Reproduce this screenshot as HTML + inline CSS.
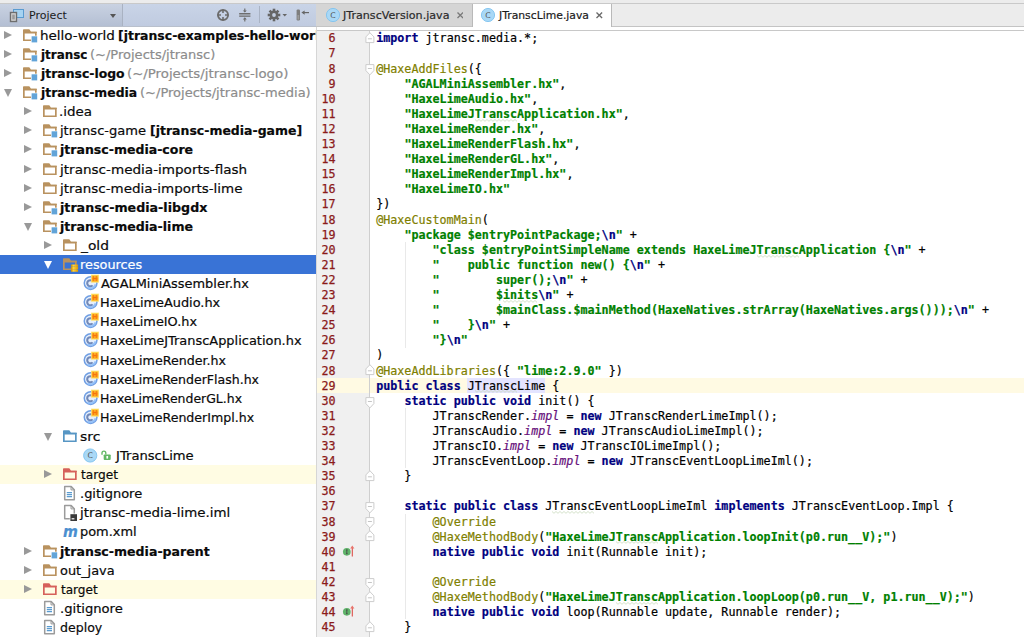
<!DOCTYPE html><html><head><meta charset="utf-8"><title>JTranscLime.java</title><style>
html,body{margin:0;padding:0;}
body{width:1024px;height:637px;overflow:hidden;position:relative;background:#fff;font-family:"DejaVu Sans","Liberation Sans",sans-serif;}
.abs{position:absolute;}
#left{position:absolute;left:0;top:0;width:315.5px;height:637px;overflow:hidden;background:#fff;}
#topstrip{position:absolute;left:0;top:0;width:1024px;height:3px;background:#ececec;border-bottom:1px solid #c9c9c9;}
#lhead{position:absolute;left:0;top:3.5px;width:316px;height:22.5px;background:linear-gradient(#c9d4e7,#c0cbe0);border-bottom:0.6px solid #b9c0cc;}
#lhead .btn{position:absolute;left:0;top:0;width:122px;height:22px;background:linear-gradient(#c9d2e2,#b4bfd3);border-right:1px solid #a9b2c2;}
#lhead .title{position:absolute;left:29px;top:3px;font-size:12.8px;color:#222;line-height:16px;}
.row{position:absolute;left:0;width:316px;height:19.1px;font-size:12.9px;line-height:19px;color:#0a0a0a;white-space:pre;-webkit-text-stroke:0.2px;}
.row .t{position:absolute;top:0;transform-origin:0 0;}
.row .b{font-weight:bold;}
.row .g{color:#8c8c8c;}
.row.sel{background:#3973d6;color:#fff;}
.row.ex{background:#fffce3;}
.arr{position:absolute;width:0;height:0;}
.arr.r{border-left:8px solid #999;border-top:4.6px solid transparent;border-bottom:4.6px solid transparent;top:5.1px;margin-left:0.2px}
.arr.d{border-top:8px solid #999;border-left:4.6px solid transparent;border-right:4.6px solid transparent;top:6px;margin-left:-0.6px;}
.sel .arr.d{border-top-color:#fff;}
.ic{position:absolute;top:0;}
#split{position:absolute;left:315.5px;top:26px;width:1.5px;height:611px;background:#d6d6d6;}
#tabs{position:absolute;left:316px;top:3.5px;width:708px;height:23px;background:#ececec;border-bottom:1px solid #c4c4c4;box-sizing:border-box;}
#tab1{position:absolute;left:316px;top:3.5px;width:156px;height:22.5px;background:#d5d5d5;}
#tab2{position:absolute;left:471.5px;top:3.5px;width:140px;height:23.5px;background:#fff;border-left:1px solid #b9b9b9;border-right:1px solid #b9b9b9;box-sizing:border-box;}
.tabt{position:absolute;top:4px;font-size:12.5px;line-height:16px;color:#222;white-space:pre;}
#edtop{position:absolute;left:317px;top:26.5px;width:707px;height:3.5px;background:#fff;border-bottom:1px solid #c8c8c8;}
#gutter{position:absolute;left:316.6px;top:30.5px;width:52.8px;height:606px;background:#f0f0f0;}
#foldline{position:absolute;left:369.3px;top:30.5px;width:1.1px;height:607px;background:#cfcfcf;}
.ln{position:absolute;left:315.6px;width:20px;text-align:right;font-family:"DejaVu Sans Mono","Liberation Mono",monospace;font-size:11.7px;line-height:15.1px;height:15.1px;color:#8b1a1a;-webkit-text-stroke:0.25px #8b1a1a;}
.cl{position:absolute;left:376.2px;font-family:"DejaVu Sans Mono","Liberation Mono",monospace;font-size:11.7px;line-height:15.1px;height:15.1px;white-space:pre;color:#000;letter-spacing:0.007px;-webkit-text-stroke:0.2px;}
.k{color:#000080;font-weight:bold;}
.s{color:#008000;font-weight:bold;}
.e{color:#000080;font-weight:bold;}
.a{color:#808000;}
.f{color:#660e7a;font-style:italic;}
.hl{background:#e4e4ff;}
#caret{position:absolute;left:317px;width:707px;background:#fffae3;height:15.1px;}
.ig{position:absolute;width:1px;background:#e9e9e9;}
</style></head><body>
<svg width="0" height="0" style="position:absolute"><defs><linearGradient id="rg" x1="0" x2="1"><stop offset="0" stop-color="#c98a00"/><stop offset="0.35" stop-color="#ffd43a"/><stop offset="1" stop-color="#e09a00"/></linearGradient><linearGradient id="hxb" x1="0" y1="0" x2="0" y2="1"><stop offset="0" stop-color="#ffd23a"/><stop offset="0.5" stop-color="#ff9a1c"/><stop offset="1" stop-color="#ffc02e"/></linearGradient></defs></svg>
<div id="left">
<div id="lhead"><div class="btn"></div><svg class="abs" style="left:9px;top:4px" width="18" height="16" viewBox="0 0 18 16"><rect x="4.5" y="1.5" width="10" height="8" fill="#a6d3f2" stroke="#5a9bd0" stroke-width="1"/><rect x="1.5" y="4.5" width="6" height="9" fill="#d8d8d8" stroke="#6e6e6e" stroke-width="1.4"/><rect x="3.2" y="6.5" width="2.6" height="5" fill="#9a9a9a"/></svg><span class="abs" style="font:11px 'DejaVu Sans';line-height:16px;left:28.74px;top:4.00px;white-space:pre;transform-origin:0 0;transform:scaleX(1.0049);color:#1a1a1a">Project</span><div class="abs" style="left:110px;top:10px;border-top:4px solid #555;border-left:3.5px solid transparent;border-right:3.5px solid transparent"></div><svg class="abs" style="left:215px;top:3px" width="16" height="16" viewBox="0 0 16 16"><circle cx="8" cy="8" r="5.05" fill="none" stroke="#6c6c6c" stroke-width="1.9"/><path d="M8 2.5V6M8 10V13.5M2.5 8H6M10 8H13.5" stroke="#6c6c6c" stroke-width="1.6"/></svg><svg class="abs" style="left:237px;top:-1.6px" width="16" height="22" viewBox="0 0 16 22"><rect x="2.2" y="11.6" width="11.2" height="2.8" fill="#a9afba"/><path d="M2.2 11.6H13.4M2.2 14.3H13.4" stroke="#6e6e6e" stroke-width="1.1"/><path d="M7.8 6.4V10M7.8 19.6V16" stroke="#6e6e6e" stroke-width="1.2"/><path d="M5.8 8.4L7.8 10.6L9.8 8.4ZM5.8 17.5L7.8 15.3L9.8 17.5Z" fill="#6e6e6e"/></svg><div class="abs" style="left:259px;top:2.5px;width:1px;height:17px;background:#a9b3c4"></div><svg class="abs" style="left:266.3px;top:2.4px" width="22" height="18" viewBox="0 0 22 18"><g transform="translate(8 9)"><g fill="#666"><rect x="-1.3" y="-6.3" width="2.6" height="12.6"/><rect x="-1.3" y="-6.3" width="2.6" height="12.6" transform="rotate(45)"/><rect x="-1.3" y="-6.3" width="2.6" height="12.6" transform="rotate(90)"/><rect x="-1.3" y="-6.3" width="2.6" height="12.6" transform="rotate(135)"/><circle r="4.4"/></g><circle r="1.9" fill="#c3cee0"/></g><path d="M16.5 8H21L18.75 10.6Z" fill="#666"/></svg><svg class="abs" style="left:295px;top:3px" width="18" height="16" viewBox="0 0 18 16"><rect x="1.6" y="2.4" width="3.4" height="11" rx="1.2" fill="#7d7d7d"/><rect x="2.4" y="8" width="1.8" height="4.6" fill="#9a9a9a"/><path d="M8.5 5.6H14" stroke="#666" stroke-width="1.2"/><path d="M9.6 3.4L6.4 5.6L9.6 7.8Z" fill="#666"/></svg></div>
<div class="row " style="top:25.80px"><div class="arr r" style="left:4.2px"></div><div class="abs" style="left:22.2px;top:0"><svg class="ic" width="18" height="19" viewBox="0 0 18 19"><path d="M1.85 6.5 V14.25 H13.85 V6.55 H1.85" fill="none" stroke="#b9925f" stroke-width="1.7" stroke-linejoin="miter"/><path d="M1 7 V4.1 Q1 3.3 1.8 3.3 H7 Q7.6 3.3 7.9 3.9 L9 5.7 H14.7 V7 Z" fill="#b9925f"/><rect x="9" y="9.7" width="6.4" height="7" fill="#fff"/><rect x="9.6" y="10.3" width="5.6" height="6.1" fill="#62a4d8"/></svg></div><span class="t" style="left:40.24px;transform:scaleX(1.0469)">hello-world</span><span class="t b" style="left:118.03px;transform:scaleX(0.9666)">[jtransc-examples-hello-world]</span></div>
<div class="row " style="top:44.90px"><div class="arr r" style="left:4.2px"></div><div class="abs" style="left:22.2px;top:0"><svg class="ic" width="18" height="19" viewBox="0 0 18 19"><path d="M1.85 6.5 V14.25 H13.85 V6.55 H1.85" fill="none" stroke="#b9925f" stroke-width="1.7" stroke-linejoin="miter"/><path d="M1 7 V4.1 Q1 3.3 1.8 3.3 H7 Q7.6 3.3 7.9 3.9 L9 5.7 H14.7 V7 Z" fill="#b9925f"/><rect x="9" y="9.7" width="6.4" height="7" fill="#fff"/><rect x="9.6" y="10.3" width="5.6" height="6.1" fill="#62a4d8"/></svg></div><span class="t b" style="left:40.87px;transform:scaleX(0.9243)">jtransc</span><span class="t g" style="left:90.08px;transform:scaleX(1.0094)">(~/Projects/jtransc)</span></div>
<div class="row " style="top:64.00px"><div class="arr r" style="left:4.2px"></div><div class="abs" style="left:22.2px;top:0"><svg class="ic" width="18" height="19" viewBox="0 0 18 19"><path d="M1.85 6.5 V14.25 H13.85 V6.55 H1.85" fill="none" stroke="#b9925f" stroke-width="1.7" stroke-linejoin="miter"/><path d="M1 7 V4.1 Q1 3.3 1.8 3.3 H7 Q7.6 3.3 7.9 3.9 L9 5.7 H14.7 V7 Z" fill="#b9925f"/><rect x="9" y="9.7" width="6.4" height="7" fill="#fff"/><rect x="9.6" y="10.3" width="5.6" height="6.1" fill="#62a4d8"/></svg></div><span class="t b" style="left:40.83px;transform:scaleX(0.9626)">jtransc-logo</span><span class="t g" style="left:127.36px;transform:scaleX(1.0319)">(~/Projects/jtransc-logo)</span></div>
<div class="row " style="top:83.10px"><div class="arr d" style="left:4.2px"></div><div class="abs" style="left:22.2px;top:0"><svg class="ic" width="18" height="19" viewBox="0 0 18 19"><path d="M1.85 6.5 V14.25 H13.85 V6.55 H1.85" fill="none" stroke="#b9925f" stroke-width="1.7" stroke-linejoin="miter"/><path d="M1 7 V4.1 Q1 3.3 1.8 3.3 H7 Q7.6 3.3 7.9 3.9 L9 5.7 H14.7 V7 Z" fill="#b9925f"/><rect x="9" y="9.7" width="6.4" height="7" fill="#fff"/><rect x="9.6" y="10.3" width="5.6" height="6.1" fill="#62a4d8"/></svg></div><span class="t b" style="left:40.83px;transform:scaleX(0.9621)">jtransc-media</span><span class="t g" style="left:140.48px;transform:scaleX(1.0102)">(~/Projects/jtransc-media)</span></div>
<div class="row " style="top:102.20px"><div class="arr r" style="left:24.1px"></div><div class="abs" style="left:42.2px;top:0"><svg class="ic" width="18" height="19" viewBox="0 0 18 19"><path d="M1.85 6.5 V14.25 H13.85 V6.55 H1.85" fill="none" stroke="#b9925f" stroke-width="1.7" stroke-linejoin="miter"/><path d="M1 7 V4.1 Q1 3.3 1.8 3.3 H7 Q7.6 3.3 7.9 3.9 L9 5.7 H14.7 V7 Z" fill="#b9925f"/></svg></div><span class="t" style="left:59.14px;transform:scaleX(1.0423)">.idea</span></div>
<div class="row " style="top:121.30px"><div class="arr r" style="left:24.1px"></div><div class="abs" style="left:42.2px;top:0"><svg class="ic" width="18" height="19" viewBox="0 0 18 19"><path d="M1.85 6.5 V14.25 H13.85 V6.55 H1.85" fill="none" stroke="#b9925f" stroke-width="1.7" stroke-linejoin="miter"/><path d="M1 7 V4.1 Q1 3.3 1.8 3.3 H7 Q7.6 3.3 7.9 3.9 L9 5.7 H14.7 V7 Z" fill="#b9925f"/><rect x="9" y="9.7" width="6.4" height="7" fill="#fff"/><rect x="9.6" y="10.3" width="5.6" height="6.1" fill="#62a4d8"/></svg></div><span class="t" style="left:60.18px;transform:scaleX(1.0120)">jtransc-game</span><span class="t b" style="left:150.22px;transform:scaleX(0.9679)">[jtransc-media-game]</span></div>
<div class="row " style="top:140.40px"><div class="arr r" style="left:24.1px"></div><div class="abs" style="left:42.2px;top:0"><svg class="ic" width="18" height="19" viewBox="0 0 18 19"><path d="M1.85 6.5 V14.25 H13.85 V6.55 H1.85" fill="none" stroke="#b9925f" stroke-width="1.7" stroke-linejoin="miter"/><path d="M1 7 V4.1 Q1 3.3 1.8 3.3 H7 Q7.6 3.3 7.9 3.9 L9 5.7 H14.7 V7 Z" fill="#b9925f"/><rect x="9" y="9.7" width="6.4" height="7" fill="#fff"/><rect x="9.6" y="10.3" width="5.6" height="6.1" fill="#62a4d8"/></svg></div><span class="t b" style="left:60.42px;transform:scaleX(0.9716)">jtransc-media-core</span></div>
<div class="row " style="top:159.50px"><div class="arr r" style="left:24.1px"></div><div class="abs" style="left:42.2px;top:0"><svg class="ic" width="18" height="19" viewBox="0 0 18 19"><path d="M1.85 6.5 V14.25 H13.85 V6.55 H1.85" fill="none" stroke="#b9925f" stroke-width="1.7" stroke-linejoin="miter"/><path d="M1 7 V4.1 Q1 3.3 1.8 3.3 H7 Q7.6 3.3 7.9 3.9 L9 5.7 H14.7 V7 Z" fill="#b9925f"/></svg></div><span class="t" style="left:60.13px;transform:scaleX(1.0511)">jtransc-media-imports-flash</span></div>
<div class="row " style="top:178.60px"><div class="arr r" style="left:24.1px"></div><div class="abs" style="left:42.2px;top:0"><svg class="ic" width="18" height="19" viewBox="0 0 18 19"><path d="M1.85 6.5 V14.25 H13.85 V6.55 H1.85" fill="none" stroke="#b9925f" stroke-width="1.7" stroke-linejoin="miter"/><path d="M1 7 V4.1 Q1 3.3 1.8 3.3 H7 Q7.6 3.3 7.9 3.9 L9 5.7 H14.7 V7 Z" fill="#b9925f"/></svg></div><span class="t" style="left:60.14px;transform:scaleX(1.0435)">jtransc-media-imports-lime</span></div>
<div class="row " style="top:197.70px"><div class="arr r" style="left:24.1px"></div><div class="abs" style="left:42.2px;top:0"><svg class="ic" width="18" height="19" viewBox="0 0 18 19"><path d="M1.85 6.5 V14.25 H13.85 V6.55 H1.85" fill="none" stroke="#b9925f" stroke-width="1.7" stroke-linejoin="miter"/><path d="M1 7 V4.1 Q1 3.3 1.8 3.3 H7 Q7.6 3.3 7.9 3.9 L9 5.7 H14.7 V7 Z" fill="#b9925f"/><rect x="9" y="9.7" width="6.4" height="7" fill="#fff"/><rect x="9.6" y="10.3" width="5.6" height="6.1" fill="#62a4d8"/></svg></div><span class="t b" style="left:60.41px;transform:scaleX(0.9811)">jtransc-media-libgdx</span></div>
<div class="row " style="top:216.80px"><div class="arr d" style="left:24.1px"></div><div class="abs" style="left:42.2px;top:0"><svg class="ic" width="18" height="19" viewBox="0 0 18 19"><path d="M1.85 6.5 V14.25 H13.85 V6.55 H1.85" fill="none" stroke="#b9925f" stroke-width="1.7" stroke-linejoin="miter"/><path d="M1 7 V4.1 Q1 3.3 1.8 3.3 H7 Q7.6 3.3 7.9 3.9 L9 5.7 H14.7 V7 Z" fill="#b9925f"/><rect x="9" y="9.7" width="6.4" height="7" fill="#fff"/><rect x="9.6" y="10.3" width="5.6" height="6.1" fill="#62a4d8"/></svg></div><span class="t b" style="left:60.42px;transform:scaleX(0.9758)">jtransc-media-lime</span></div>
<div class="row " style="top:235.90px"><div class="arr r" style="left:44.2px"></div><div class="abs" style="left:62.1px;top:0"><svg class="ic" width="18" height="19" viewBox="0 0 18 19"><path d="M1.85 6.5 V14.25 H13.85 V6.55 H1.85" fill="none" stroke="#b9925f" stroke-width="1.7" stroke-linejoin="miter"/><path d="M1 7 V4.1 Q1 3.3 1.8 3.3 H7 Q7.6 3.3 7.9 3.9 L9 5.7 H14.7 V7 Z" fill="#b9925f"/></svg></div><span class="t" style="left:80.82px;transform:scaleX(1.0682)">_old</span></div>
<div class="row sel" style="top:255.00px"><div class="arr d" style="left:44.2px"></div><div class="abs" style="left:62.1px;top:0"><svg class="ic" width="18" height="19" viewBox="0 0 18 19"><path d="M1.85 6.5 V14.25 H13.85 V6.55 H1.85" fill="none" stroke="#b9925f" stroke-width="1.7" stroke-linejoin="miter"/><path d="M1 7 V4.1 Q1 3.3 1.8 3.3 H7 Q7.6 3.3 7.9 3.9 L9 5.7 H14.7 V7 Z" fill="#b9925f"/><rect x="8.9" y="9.6" width="7.2" height="2.1" rx="0.5" fill="url(#rg)"/><rect x="8.9" y="12.1" width="7.2" height="2.1" rx="0.5" fill="url(#rg)"/><rect x="8.9" y="14.6" width="7.2" height="2.1" rx="0.5" fill="url(#rg)"/></svg></div><span class="t" style="left:79.60px;transform:scaleX(0.9945)">resources</span></div>
<div class="row " style="top:274.10px"><div class="abs" style="left:82.8px;top:0"><svg class="ic" width="17" height="19" viewBox="0 0 17 19"><circle cx="7.6" cy="9.1" r="7.1" fill="#6f9ee3"/><circle cx="7.6" cy="9.1" r="5.6" fill="#e6effc"/><path d="M9.6 7.2 A3.1 3.1 0 1 0 9.6 11.4" fill="none" stroke="#7289b8" stroke-width="2.1"/><path d="M4.6 13.2 A5.2 5.2 0 0 0 12.6 10.4" fill="none" stroke="#8dbcf8" stroke-width="2" opacity="0.9"/><rect x="8.3" y="1" width="7.4" height="7.2" fill="url(#hxb)" stroke="#ffe678" stroke-width="0.7"/><text x="12" y="7.1" font-family="Liberation Sans,sans-serif" font-size="6.6" font-weight="bold" text-anchor="middle" fill="#f4740a">H</text></svg></div><span class="t" style="left:100.50px;transform:scaleX(1.0033)">AGALMiniAssembler.hx</span></div>
<div class="row " style="top:293.20px"><div class="abs" style="left:82.8px;top:0"><svg class="ic" width="17" height="19" viewBox="0 0 17 19"><circle cx="7.6" cy="9.1" r="7.1" fill="#6f9ee3"/><circle cx="7.6" cy="9.1" r="5.6" fill="#e6effc"/><path d="M9.6 7.2 A3.1 3.1 0 1 0 9.6 11.4" fill="none" stroke="#7289b8" stroke-width="2.1"/><path d="M4.6 13.2 A5.2 5.2 0 0 0 12.6 10.4" fill="none" stroke="#8dbcf8" stroke-width="2" opacity="0.9"/><rect x="8.3" y="1" width="7.4" height="7.2" fill="url(#hxb)" stroke="#ffe678" stroke-width="0.7"/><text x="12" y="7.1" font-family="Liberation Sans,sans-serif" font-size="6.6" font-weight="bold" text-anchor="middle" fill="#f4740a">H</text></svg></div><span class="t" style="left:100.19px;transform:scaleX(0.9990)">HaxeLimeAudio.hx</span></div>
<div class="row " style="top:312.30px"><div class="abs" style="left:82.8px;top:0"><svg class="ic" width="17" height="19" viewBox="0 0 17 19"><circle cx="7.6" cy="9.1" r="7.1" fill="#6f9ee3"/><circle cx="7.6" cy="9.1" r="5.6" fill="#e6effc"/><path d="M9.6 7.2 A3.1 3.1 0 1 0 9.6 11.4" fill="none" stroke="#7289b8" stroke-width="2.1"/><path d="M4.6 13.2 A5.2 5.2 0 0 0 12.6 10.4" fill="none" stroke="#8dbcf8" stroke-width="2" opacity="0.9"/><rect x="8.3" y="1" width="7.4" height="7.2" fill="url(#hxb)" stroke="#ffe678" stroke-width="0.7"/><text x="12" y="7.1" font-family="Liberation Sans,sans-serif" font-size="6.6" font-weight="bold" text-anchor="middle" fill="#f4740a">H</text></svg></div><span class="t" style="left:100.19px;transform:scaleX(0.9967)">HaxeLimeIO.hx</span></div>
<div class="row " style="top:331.40px"><div class="abs" style="left:82.8px;top:0"><svg class="ic" width="17" height="19" viewBox="0 0 17 19"><circle cx="7.6" cy="9.1" r="7.1" fill="#6f9ee3"/><circle cx="7.6" cy="9.1" r="5.6" fill="#e6effc"/><path d="M9.6 7.2 A3.1 3.1 0 1 0 9.6 11.4" fill="none" stroke="#7289b8" stroke-width="2.1"/><path d="M4.6 13.2 A5.2 5.2 0 0 0 12.6 10.4" fill="none" stroke="#8dbcf8" stroke-width="2" opacity="0.9"/><rect x="8.3" y="1" width="7.4" height="7.2" fill="url(#hxb)" stroke="#ffe678" stroke-width="0.7"/><text x="12" y="7.1" font-family="Liberation Sans,sans-serif" font-size="6.6" font-weight="bold" text-anchor="middle" fill="#f4740a">H</text></svg></div><span class="t" style="left:100.19px;transform:scaleX(1.0033)">HaxeLimeJTranscApplication.hx</span></div>
<div class="row " style="top:350.50px"><div class="abs" style="left:82.8px;top:0"><svg class="ic" width="17" height="19" viewBox="0 0 17 19"><circle cx="7.6" cy="9.1" r="7.1" fill="#6f9ee3"/><circle cx="7.6" cy="9.1" r="5.6" fill="#e6effc"/><path d="M9.6 7.2 A3.1 3.1 0 1 0 9.6 11.4" fill="none" stroke="#7289b8" stroke-width="2.1"/><path d="M4.6 13.2 A5.2 5.2 0 0 0 12.6 10.4" fill="none" stroke="#8dbcf8" stroke-width="2" opacity="0.9"/><rect x="8.3" y="1" width="7.4" height="7.2" fill="url(#hxb)" stroke="#ffe678" stroke-width="0.7"/><text x="12" y="7.1" font-family="Liberation Sans,sans-serif" font-size="6.6" font-weight="bold" text-anchor="middle" fill="#f4740a">H</text></svg></div><span class="t" style="left:100.22px;transform:scaleX(0.9794)">HaxeLimeRender.hx</span></div>
<div class="row " style="top:369.60px"><div class="abs" style="left:82.8px;top:0"><svg class="ic" width="17" height="19" viewBox="0 0 17 19"><circle cx="7.6" cy="9.1" r="7.1" fill="#6f9ee3"/><circle cx="7.6" cy="9.1" r="5.6" fill="#e6effc"/><path d="M9.6 7.2 A3.1 3.1 0 1 0 9.6 11.4" fill="none" stroke="#7289b8" stroke-width="2.1"/><path d="M4.6 13.2 A5.2 5.2 0 0 0 12.6 10.4" fill="none" stroke="#8dbcf8" stroke-width="2" opacity="0.9"/><rect x="8.3" y="1" width="7.4" height="7.2" fill="url(#hxb)" stroke="#ffe678" stroke-width="0.7"/><text x="12" y="7.1" font-family="Liberation Sans,sans-serif" font-size="6.6" font-weight="bold" text-anchor="middle" fill="#f4740a">H</text></svg></div><span class="t" style="left:100.22px;transform:scaleX(0.9722)">HaxeLimeRenderFlash.hx</span></div>
<div class="row " style="top:388.70px"><div class="abs" style="left:82.8px;top:0"><svg class="ic" width="17" height="19" viewBox="0 0 17 19"><circle cx="7.6" cy="9.1" r="7.1" fill="#6f9ee3"/><circle cx="7.6" cy="9.1" r="5.6" fill="#e6effc"/><path d="M9.6 7.2 A3.1 3.1 0 1 0 9.6 11.4" fill="none" stroke="#7289b8" stroke-width="2.1"/><path d="M4.6 13.2 A5.2 5.2 0 0 0 12.6 10.4" fill="none" stroke="#8dbcf8" stroke-width="2" opacity="0.9"/><rect x="8.3" y="1" width="7.4" height="7.2" fill="url(#hxb)" stroke="#ffe678" stroke-width="0.7"/><text x="12" y="7.1" font-family="Liberation Sans,sans-serif" font-size="6.6" font-weight="bold" text-anchor="middle" fill="#f4740a">H</text></svg></div><span class="t" style="left:100.23px;transform:scaleX(0.9664)">HaxeLimeRenderGL.hx</span></div>
<div class="row " style="top:407.80px"><div class="abs" style="left:82.8px;top:0"><svg class="ic" width="17" height="19" viewBox="0 0 17 19"><circle cx="7.6" cy="9.1" r="7.1" fill="#6f9ee3"/><circle cx="7.6" cy="9.1" r="5.6" fill="#e6effc"/><path d="M9.6 7.2 A3.1 3.1 0 1 0 9.6 11.4" fill="none" stroke="#7289b8" stroke-width="2.1"/><path d="M4.6 13.2 A5.2 5.2 0 0 0 12.6 10.4" fill="none" stroke="#8dbcf8" stroke-width="2" opacity="0.9"/><rect x="8.3" y="1" width="7.4" height="7.2" fill="url(#hxb)" stroke="#ffe678" stroke-width="0.7"/><text x="12" y="7.1" font-family="Liberation Sans,sans-serif" font-size="6.6" font-weight="bold" text-anchor="middle" fill="#f4740a">H</text></svg></div><span class="t" style="left:100.22px;transform:scaleX(0.9761)">HaxeLimeRenderImpl.hx</span></div>
<div class="row " style="top:426.90px"><div class="arr d" style="left:44.2px"></div><div class="abs" style="left:62.1px;top:0"><svg class="ic" width="18" height="19" viewBox="0 0 18 19"><path d="M1.85 6.5 V14.25 H13.85 V6.55 H1.85" fill="none" stroke="#5796c4" stroke-width="1.7" stroke-linejoin="miter"/><path d="M1 7 V4.1 Q1 3.3 1.8 3.3 H7 Q7.6 3.3 7.9 3.9 L9 5.7 H14.7 V7 Z" fill="#5796c4"/></svg></div><span class="t" style="left:80.25px;transform:scaleX(1.0804)">src</span></div>
<div class="row " style="top:446.00px"><div class="abs" style="left:82.8px;top:0"><svg class="ic" width="16" height="19" viewBox="0 0 16 19"><circle cx="7.2" cy="9.5" r="6.6" fill="#a9d8f6" stroke="#7fc3ef" stroke-width="0.9"/><text x="7.2" y="12.3" font-family="DejaVu Sans,sans-serif" font-size="7.8" text-anchor="middle" fill="#555">C</text></svg></div><div class="abs" style="left:100px;top:0"><svg class="ic" width="12" height="19" viewBox="0 0 12 19"><rect x="3.7" y="8.4" width="7" height="5.6" rx="0.9" fill="#62b865"/><path d="M2 8.8 V7 A1.9 1.9 0 0 1 5.8 7 V8.6" fill="none" stroke="#62b865" stroke-width="1.35"/><rect x="6.4" y="10" width="1.7" height="2.6" fill="#fff"/></svg></div><span class="t" style="left:116.02px;transform:scaleX(1.0198)">JTranscLime</span></div>
<div class="row ex" style="top:465.10px"><div class="arr r" style="left:44.2px"></div><div class="abs" style="left:62.1px;top:0"><svg class="ic" width="18" height="19" viewBox="0 0 18 19"><path d="M1.85 6.5 V14.25 H13.85 V6.55 H1.85" fill="none" stroke="#d6615a" stroke-width="1.7" stroke-linejoin="miter"/><path d="M1 7 V4.1 Q1 3.3 1.8 3.3 H7 Q7.6 3.3 7.9 3.9 L9 5.7 H14.7 V7 Z" fill="#d6615a"/></svg></div><span class="t" style="left:80.71px;transform:scaleX(0.9433)">target</span></div>
<div class="row " style="top:484.20px"><div class="abs" style="left:62.9px;top:0"><svg class="ic" width="14" height="19" viewBox="0 0 14 19"><path d="M1.7 2.6 H8.2 L11.3 5.7 V15.8 H1.7 Z" fill="#fff" stroke="#9b9b9b" stroke-width="1.5" stroke-linejoin="round"/><path d="M8 2.6 V5.9 H11.3" fill="none" stroke="#9a9a9a" stroke-width="1"/><path d="M3.8 8.6 H9 M3.8 10.6 H9 M3.8 12.6 H9" stroke="#5a9bd0" stroke-width="1.1"/></svg></div><span class="t" style="left:80.28px;transform:scaleX(1.0077)">.gitignore</span></div>
<div class="row " style="top:503.30px"><div class="abs" style="left:62.9px;top:0"><svg class="ic" width="16" height="19" viewBox="0 0 16 19"><path d="M1.7 2.6 H8.2 L11.3 5.7 V15.8 H1.7 Z" fill="#fff" stroke="#9b9b9b" stroke-width="1.5" stroke-linejoin="round"/><path d="M8 2.6 V5.9 H11.3" fill="none" stroke="#9a9a9a" stroke-width="1"/><rect x="6.8" y="10.6" width="7.2" height="7.4" fill="#fff"/><rect x="7.4" y="11.2" width="6.6" height="6.8" fill="#3a3a3a"/><rect x="8.6" y="15.2" width="2.8" height="1.2" fill="#fff"/></svg></div><span class="t" style="left:79.74px;transform:scaleX(1.0382)">jtransc-media-lime.iml</span></div>
<div class="row " style="top:522.40px"><div class="abs" style="left:62.1px;top:0"><span class="ic" style="font:italic bold 15.5px 'DejaVu Sans',sans-serif;color:#4b8fd0;line-height:20px;left:0.8px;transform:scaleX(0.92);transform-origin:0 0;letter-spacing:-0.5px">m</span></div><span class="t" style="left:80.49px;transform:scaleX(1.0026)">pom.xml</span></div>
<div class="row " style="top:541.50px"><div class="arr r" style="left:24.1px"></div><div class="abs" style="left:42.2px;top:0"><svg class="ic" width="18" height="19" viewBox="0 0 18 19"><path d="M1.85 6.5 V14.25 H13.85 V6.55 H1.85" fill="none" stroke="#b9925f" stroke-width="1.7" stroke-linejoin="miter"/><path d="M1 7 V4.1 Q1 3.3 1.8 3.3 H7 Q7.6 3.3 7.9 3.9 L9 5.7 H14.7 V7 Z" fill="#b9925f"/><rect x="9" y="9.7" width="6.4" height="7" fill="#fff"/><rect x="9.6" y="10.3" width="5.6" height="6.1" fill="#62a4d8"/></svg></div><span class="t b" style="left:60.42px;transform:scaleX(0.9738)">jtransc-media-parent</span></div>
<div class="row " style="top:560.60px"><div class="arr r" style="left:24.1px"></div><div class="abs" style="left:42.2px;top:0"><svg class="ic" width="18" height="19" viewBox="0 0 18 19"><path d="M1.85 6.5 V14.25 H13.85 V6.55 H1.85" fill="none" stroke="#b9925f" stroke-width="1.7" stroke-linejoin="miter"/><path d="M1 7 V4.1 Q1 3.3 1.8 3.3 H7 Q7.6 3.3 7.9 3.9 L9 5.7 H14.7 V7 Z" fill="#b9925f"/></svg></div><span class="t" style="left:60.39px;transform:scaleX(1.0010)">out_java</span></div>
<div class="row ex" style="top:579.70px"><div class="arr r" style="left:24.1px"></div><div class="abs" style="left:42.2px;top:0"><svg class="ic" width="18" height="19" viewBox="0 0 18 19"><path d="M1.85 6.5 V14.25 H13.85 V6.55 H1.85" fill="none" stroke="#d6615a" stroke-width="1.7" stroke-linejoin="miter"/><path d="M1 7 V4.1 Q1 3.3 1.8 3.3 H7 Q7.6 3.3 7.9 3.9 L9 5.7 H14.7 V7 Z" fill="#d6615a"/></svg></div><span class="t" style="left:60.81px;transform:scaleX(0.9355)">target</span></div>
<div class="row " style="top:598.80px"><div class="abs" style="left:43.0px;top:0"><svg class="ic" width="14" height="19" viewBox="0 0 14 19"><path d="M1.7 2.6 H8.2 L11.3 5.7 V15.8 H1.7 Z" fill="#fff" stroke="#9b9b9b" stroke-width="1.5" stroke-linejoin="round"/><path d="M8 2.6 V5.9 H11.3" fill="none" stroke="#9a9a9a" stroke-width="1"/><path d="M3.8 8.6 H9 M3.8 10.6 H9 M3.8 12.6 H9" stroke="#5a9bd0" stroke-width="1.1"/></svg></div><span class="t" style="left:59.77px;transform:scaleX(1.0177)">.gitignore</span></div>
<div class="row " style="top:617.90px"><div class="abs" style="left:43.0px;top:0"><svg class="ic" width="14" height="19" viewBox="0 0 14 19"><path d="M1.7 2.6 H8.2 L11.3 5.7 V15.8 H1.7 Z" fill="#fff" stroke="#9b9b9b" stroke-width="1.5" stroke-linejoin="round"/><path d="M8 2.6 V5.9 H11.3" fill="none" stroke="#9a9a9a" stroke-width="1"/><path d="M3.8 8.6 H9 M3.8 10.6 H9 M3.8 12.6 H9" stroke="#5a9bd0" stroke-width="1.1"/></svg></div><span class="t" style="left:60.41px;transform:scaleX(0.9731)">deploy</span></div>
</div>
<div id="split"></div>
<div id="topstrip"></div>
<div id="tabs"></div><div id="tab1"></div><div id="tab2"></div>
<svg class="abs" style="left:324.70px;top:7.00px" width="16" height="16" viewBox="0 0 16 16"><circle cx="8" cy="8" r="6.60" fill="#a9d8f6" stroke="#7fc3ef" stroke-width="0.9"/><text x="8" y="10.9" font-family="DejaVu Sans,sans-serif" font-size="7.8" text-anchor="middle" fill="#555">C</text></svg>
<span class="abs" style="font:11px 'DejaVu Sans';line-height:16px;left:343.21px;top:8.10px;white-space:pre;transform-origin:0 0;transform:scaleX(1.0108);color:#2a2a2a;-webkit-text-stroke:0.2px">JTranscVersion.java</span>
<svg class="abs" style="left:456.60px;top:12.00px" width="6.6" height="6.6" viewBox="0 0 6.6 6.6"><path d="M0.5 0.5 L6.1 6.1 M6.1 0.5 L0.5 6.1" stroke="#7a7a7a" stroke-width="1.35" fill="none"/></svg>
<svg class="abs" style="left:480.00px;top:7.00px" width="16" height="16" viewBox="0 0 16 16"><circle cx="8" cy="8" r="6.60" fill="#a9d8f6" stroke="#7fc3ef" stroke-width="0.9"/><text x="8" y="10.9" font-family="DejaVu Sans,sans-serif" font-size="7.8" text-anchor="middle" fill="#555">C</text></svg>
<span class="abs" style="font:11px 'DejaVu Sans';line-height:16px;left:499.39px;top:8.10px;white-space:pre;transform-origin:0 0;transform:scaleX(0.9827);color:#1a1a1a;-webkit-text-stroke:0.2px">JTranscLime.java</span>
<svg class="abs" style="left:596.40px;top:12.00px" width="6.6" height="6.6" viewBox="0 0 6.6 6.6"><path d="M0.5 0.5 L6.1 6.1 M6.1 0.5 L0.5 6.1" stroke="#6a6a6a" stroke-width="1.35" fill="none"/></svg>
<div id="edtop"></div><div id="gutter"></div>
<div id="caret" style="top:377.85px"></div>
<div class="abs" style="left:467.05px;top:378.15px;width:78.15px;height:14.6px;background:#e4e4ff"></div>
<div id="foldline"></div>
<div class="ig" style="left:405.3px;top:241.95px;height:105.70px"></div>
<div class="ig" style="left:405.3px;top:408.05px;height:60.40px"></div>
<div class="ig" style="left:405.3px;top:513.75px;height:105.70px"></div>
<div class="ln" style="top:31.35px">6</div>
<div class="cl" id="c6" style="top:31.35px"><span class="k">import</span> jtransc.media.*;</div>
<div class="ln" style="top:46.45px">7</div>
<div class="ln" style="top:61.55px">8</div>
<div class="cl" id="c8" style="top:61.55px"><span class="a">@HaxeAddFiles</span>({</div>
<div class="ln" style="top:76.65px">9</div>
<div class="cl" id="c9" style="top:76.65px">    <span class="s">"AGALMiniAssembler.hx"</span>,</div>
<div class="ln" style="top:91.75px">10</div>
<div class="cl" id="c10" style="top:91.75px">    <span class="s">"HaxeLimeAudio.hx"</span>,</div>
<div class="ln" style="top:106.85px">11</div>
<div class="cl" id="c11" style="top:106.85px">    <span class="s">"HaxeLimeJTranscApplication.hx"</span>,</div>
<div class="ln" style="top:121.95px">12</div>
<div class="cl" id="c12" style="top:121.95px">    <span class="s">"HaxeLimeRender.hx"</span>,</div>
<div class="ln" style="top:137.05px">13</div>
<div class="cl" id="c13" style="top:137.05px">    <span class="s">"HaxeLimeRenderFlash.hx"</span>,</div>
<div class="ln" style="top:152.15px">14</div>
<div class="cl" id="c14" style="top:152.15px">    <span class="s">"HaxeLimeRenderGL.hx"</span>,</div>
<div class="ln" style="top:167.25px">15</div>
<div class="cl" id="c15" style="top:167.25px">    <span class="s">"HaxeLimeRenderImpl.hx"</span>,</div>
<div class="ln" style="top:182.35px">16</div>
<div class="cl" id="c16" style="top:182.35px">    <span class="s">"HaxeLimeIO.hx"</span></div>
<div class="ln" style="top:197.45px">17</div>
<div class="cl" id="c17" style="top:197.45px">})</div>
<div class="ln" style="top:212.55px">18</div>
<div class="cl" id="c18" style="top:212.55px"><span class="a">@HaxeCustomMain</span>(</div>
<div class="ln" style="top:227.65px">19</div>
<div class="cl" id="c19" style="top:227.65px">    <span class="s">"package $entryPointPackage;</span><span class="e">\n</span><span class="s">"</span> +</div>
<div class="ln" style="top:242.75px">20</div>
<div class="cl" id="c20" style="top:242.75px">        <span class="s">"class $entryPointSimpleName extends HaxeLimeJTranscApplication {</span><span class="e">\n</span><span class="s">"</span> +</div>
<div class="ln" style="top:257.85px">21</div>
<div class="cl" id="c21" style="top:257.85px">        <span class="s">"    public function new() {</span><span class="e">\n</span><span class="s">"</span> +</div>
<div class="ln" style="top:272.95px">22</div>
<div class="cl" id="c22" style="top:272.95px">        <span class="s">"        super();</span><span class="e">\n</span><span class="s">"</span> +</div>
<div class="ln" style="top:288.05px">23</div>
<div class="cl" id="c23" style="top:288.05px">        <span class="s">"        $inits</span><span class="e">\n</span><span class="s">"</span> +</div>
<div class="ln" style="top:303.15px">24</div>
<div class="cl" id="c24" style="top:303.15px">        <span class="s">"        $mainClass.$mainMethod(HaxeNatives.strArray(HaxeNatives.args()));</span><span class="e">\n</span><span class="s">"</span> +</div>
<div class="ln" style="top:318.25px">25</div>
<div class="cl" id="c25" style="top:318.25px">        <span class="s">"    }</span><span class="e">\n</span><span class="s">"</span> +</div>
<div class="ln" style="top:333.35px">26</div>
<div class="cl" id="c26" style="top:333.35px">        <span class="s">"}</span><span class="e">\n</span><span class="s">"</span></div>
<div class="ln" style="top:348.45px">27</div>
<div class="cl" id="c27" style="top:348.45px">)</div>
<div class="ln" style="top:363.55px">28</div>
<div class="cl" id="c28" style="top:363.55px"><span class="a">@HaxeAddLibraries</span>({ <span class="s">"lime:2.9.0"</span> })</div>
<div class="ln" style="top:378.65px">29</div>
<div class="cl" id="c29" style="top:378.65px"><span class="k">public class</span> JTranscLime {</div>
<div class="ln" style="top:393.75px">30</div>
<div class="cl" id="c30" style="top:393.75px">    <span class="k">static public void</span> init() {</div>
<div class="ln" style="top:408.85px">31</div>
<div class="cl" id="c31" style="top:408.85px">        JTranscRender.<span class="f">impl</span> = <span class="k">new</span> JTranscRenderLimeImpl();</div>
<div class="ln" style="top:423.95px">32</div>
<div class="cl" id="c32" style="top:423.95px">        JTranscAudio.<span class="f">impl</span> = <span class="k">new</span> JTranscAudioLimeImpl();</div>
<div class="ln" style="top:439.05px">33</div>
<div class="cl" id="c33" style="top:439.05px">        JTranscIO.<span class="f">impl</span> = <span class="k">new</span> JTranscIOLimeImpl();</div>
<div class="ln" style="top:454.15px">34</div>
<div class="cl" id="c34" style="top:454.15px">        JTranscEventLoop.<span class="f">impl</span> = <span class="k">new</span> JTranscEventLoopLimeIml();</div>
<div class="ln" style="top:469.25px">35</div>
<div class="cl" id="c35" style="top:469.25px">    }</div>
<div class="ln" style="top:484.35px">36</div>
<div class="ln" style="top:499.45px">37</div>
<div class="cl" id="c37" style="top:499.45px">    <span class="k">static public class</span> JTranscEventLoopLimeIml <span class="k">implements</span> JTranscEventLoop.Impl {</div>
<div class="ln" style="top:514.55px">38</div>
<div class="cl" id="c38" style="top:514.55px">        <span class="a">@Override</span></div>
<div class="ln" style="top:529.65px">39</div>
<div class="cl" id="c39" style="top:529.65px">        <span class="a">@HaxeMethodBody</span>(<span class="s">"HaxeLimeJTranscApplication.loopInit(p0.run__V);"</span>)</div>
<div class="ln" style="top:544.75px">40</div>
<div class="cl" id="c40" style="top:544.75px">        <span class="k">native public void</span> init(Runnable init);</div>
<div class="ln" style="top:559.85px">41</div>
<div class="ln" style="top:574.95px">42</div>
<div class="cl" id="c42" style="top:574.95px">        <span class="a">@Override</span></div>
<div class="ln" style="top:590.05px">43</div>
<div class="cl" id="c43" style="top:590.05px">        <span class="a">@HaxeMethodBody</span>(<span class="s">"HaxeLimeJTranscApplication.loopLoop(p0.run__V, p1.run__V);"</span>)</div>
<div class="ln" style="top:605.15px">44</div>
<div class="cl" id="c44" style="top:605.15px">        <span class="k">native public void</span> loop(Runnable update, Runnable render);</div>
<div class="ln" style="top:620.25px">45</div>
<div class="cl" id="c45" style="top:620.25px">    }</div>
<div class="ln" style="top:635.35px">46</div>
<svg class="abs" style="left:474.90px;top:118.65px" width="42.3" height="3" viewBox="0 0 42.3 3"><polyline points="0.0,0.5 2.0,2.3 4.0,0.5 6.0,2.3 8.0,0.5 10.0,2.3 12.0,0.5 14.0,2.3 16.0,0.5 18.0,2.3 20.0,0.5 22.0,2.3 24.0,0.5 26.0,2.3 28.0,0.5 30.0,2.3 32.0,0.5 34.0,2.3 36.0,0.5 38.0,2.3 40.0,0.5 42.0,2.3" fill="none" stroke="#c3d6b4" stroke-width="0.7"/></svg>
<svg class="abs" style="left:756.90px;top:254.55px" width="42.3" height="3" viewBox="0 0 42.3 3"><polyline points="0.0,0.5 2.0,2.3 4.0,0.5 6.0,2.3 8.0,0.5 10.0,2.3 12.0,0.5 14.0,2.3 16.0,0.5 18.0,2.3 20.0,0.5 22.0,2.3 24.0,0.5 26.0,2.3 28.0,0.5 30.0,2.3 32.0,0.5 34.0,2.3 36.0,0.5 38.0,2.3 40.0,0.5 42.0,2.3" fill="none" stroke="#c3d6b4" stroke-width="0.7"/></svg>
<svg class="abs" style="left:503.10px;top:299.85px" width="35.2" height="3" viewBox="0 0 35.2 3"><polyline points="0.0,0.5 2.0,2.3 4.0,0.5 6.0,2.3 8.0,0.5 10.0,2.3 12.0,0.5 14.0,2.3 16.0,0.5 18.0,2.3 20.0,0.5 22.0,2.3 24.0,0.5 26.0,2.3 28.0,0.5 30.0,2.3 32.0,0.5 34.0,2.3" fill="none" stroke="#c3d6b4" stroke-width="0.7"/></svg>
<svg class="abs" style="left:474.90px;top:390.45px" width="42.3" height="3" viewBox="0 0 42.3 3"><polyline points="0.0,0.5 2.0,2.3 4.0,0.5 6.0,2.3 8.0,0.5 10.0,2.3 12.0,0.5 14.0,2.3 16.0,0.5 18.0,2.3 20.0,0.5 22.0,2.3 24.0,0.5 26.0,2.3 28.0,0.5 30.0,2.3 32.0,0.5 34.0,2.3 36.0,0.5 38.0,2.3 40.0,0.5 42.0,2.3" fill="none" stroke="#c3d6b4" stroke-width="0.7"/></svg>
<svg class="abs" style="left:552.45px;top:511.25px" width="42.3" height="3" viewBox="0 0 42.3 3"><polyline points="0.0,0.5 2.0,2.3 4.0,0.5 6.0,2.3 8.0,0.5 10.0,2.3 12.0,0.5 14.0,2.3 16.0,0.5 18.0,2.3 20.0,0.5 22.0,2.3 24.0,0.5 26.0,2.3 28.0,0.5 30.0,2.3 32.0,0.5 34.0,2.3 36.0,0.5 38.0,2.3 40.0,0.5 42.0,2.3" fill="none" stroke="#c3d6b4" stroke-width="0.7"/></svg>
<svg class="abs" style="left:615.90px;top:541.45px" width="42.3" height="3" viewBox="0 0 42.3 3"><polyline points="0.0,0.5 2.0,2.3 4.0,0.5 6.0,2.3 8.0,0.5 10.0,2.3 12.0,0.5 14.0,2.3 16.0,0.5 18.0,2.3 20.0,0.5 22.0,2.3 24.0,0.5 26.0,2.3 28.0,0.5 30.0,2.3 32.0,0.5 34.0,2.3 36.0,0.5 38.0,2.3 40.0,0.5 42.0,2.3" fill="none" stroke="#c3d6b4" stroke-width="0.7"/></svg>
<svg class="abs" style="left:615.90px;top:601.85px" width="42.3" height="3" viewBox="0 0 42.3 3"><polyline points="0.0,0.5 2.0,2.3 4.0,0.5 6.0,2.3 8.0,0.5 10.0,2.3 12.0,0.5 14.0,2.3 16.0,0.5 18.0,2.3 20.0,0.5 22.0,2.3 24.0,0.5 26.0,2.3 28.0,0.5 30.0,2.3 32.0,0.5 34.0,2.3 36.0,0.5 38.0,2.3 40.0,0.5 42.0,2.3" fill="none" stroke="#c3d6b4" stroke-width="0.7"/></svg>
<svg class="abs" style="left:365.3px;top:64.35px" width="10" height="12" viewBox="0 0 10 12"><path d="M0.9 0.6 H8.9 V6.6 L4.9 10.9 L0.9 6.6 Z" fill="#fff" stroke="#cdcdcd" stroke-width="1"/><path d="M2.9 4.5 H6.9" stroke="#c6c6c6" stroke-width="1"/></svg>
<svg class="abs" style="left:365.3px;top:396.55px" width="10" height="12" viewBox="0 0 10 12"><path d="M0.9 0.6 H8.9 V6.6 L4.9 10.9 L0.9 6.6 Z" fill="#fff" stroke="#cdcdcd" stroke-width="1"/><path d="M2.9 4.5 H6.9" stroke="#c6c6c6" stroke-width="1"/></svg>
<svg class="abs" style="left:365.3px;top:502.25px" width="10" height="12" viewBox="0 0 10 12"><path d="M0.9 0.6 H8.9 V6.6 L4.9 10.9 L0.9 6.6 Z" fill="#fff" stroke="#cdcdcd" stroke-width="1"/><path d="M2.9 4.5 H6.9" stroke="#c6c6c6" stroke-width="1"/></svg>
<svg class="abs" style="left:365.3px;top:517.35px" width="10" height="12" viewBox="0 0 10 12"><path d="M0.9 0.6 H8.9 V6.6 L4.9 10.9 L0.9 6.6 Z" fill="#fff" stroke="#cdcdcd" stroke-width="1"/><path d="M2.9 4.5 H6.9" stroke="#c6c6c6" stroke-width="1"/></svg>
<svg class="abs" style="left:365.3px;top:577.75px" width="10" height="12" viewBox="0 0 10 12"><path d="M0.9 0.6 H8.9 V6.6 L4.9 10.9 L0.9 6.6 Z" fill="#fff" stroke="#cdcdcd" stroke-width="1"/><path d="M2.9 4.5 H6.9" stroke="#c6c6c6" stroke-width="1"/></svg>
<svg class="abs" style="left:365.3px;top:31.95px" width="10" height="12" viewBox="0 0 10 12"><path d="M0.9 10.6 H8.9 V4.9 L4.9 0.7 L0.9 4.9 Z" fill="#fff" stroke="#cdcdcd" stroke-width="1"/><path d="M2.9 6.8 H6.9" stroke="#c6c6c6" stroke-width="1"/></svg>
<svg class="abs" style="left:365.3px;top:364.15px" width="10" height="12" viewBox="0 0 10 12"><path d="M0.9 10.6 H8.9 V4.9 L4.9 0.7 L0.9 4.9 Z" fill="#fff" stroke="#cdcdcd" stroke-width="1"/><path d="M2.9 6.8 H6.9" stroke="#c6c6c6" stroke-width="1"/></svg>
<svg class="abs" style="left:365.3px;top:469.85px" width="10" height="12" viewBox="0 0 10 12"><path d="M0.9 10.6 H8.9 V4.9 L4.9 0.7 L0.9 4.9 Z" fill="#fff" stroke="#cdcdcd" stroke-width="1"/><path d="M2.9 6.8 H6.9" stroke="#c6c6c6" stroke-width="1"/></svg>
<svg class="abs" style="left:365.3px;top:530.25px" width="10" height="12" viewBox="0 0 10 12"><path d="M0.9 10.6 H8.9 V4.9 L4.9 0.7 L0.9 4.9 Z" fill="#fff" stroke="#cdcdcd" stroke-width="1"/><path d="M2.9 6.8 H6.9" stroke="#c6c6c6" stroke-width="1"/></svg>
<svg class="abs" style="left:365.3px;top:590.65px" width="10" height="12" viewBox="0 0 10 12"><path d="M0.9 10.6 H8.9 V4.9 L4.9 0.7 L0.9 4.9 Z" fill="#fff" stroke="#cdcdcd" stroke-width="1"/><path d="M2.9 6.8 H6.9" stroke="#c6c6c6" stroke-width="1"/></svg>
<svg class="abs" style="left:365.3px;top:620.85px" width="10" height="12" viewBox="0 0 10 12"><path d="M0.9 10.6 H8.9 V4.9 L4.9 0.7 L0.9 4.9 Z" fill="#fff" stroke="#cdcdcd" stroke-width="1"/><path d="M2.9 6.8 H6.9" stroke="#c6c6c6" stroke-width="1"/></svg>
<svg class="abs" style="left:342px;top:543.95px" width="14" height="15" viewBox="0 0 14 15"><circle cx="4.8" cy="7.8" r="3.85" fill="#5fb36a"/><path d="M4 5.9 H5.6 M4.8 5.9 V9.7 M4 9.7 H5.6" stroke="#4a4a4a" stroke-width="0.9" fill="none"/><path d="M10.3 12.6 V3.2" stroke="#dc4f48" stroke-width="1.1"/><path d="M8.2 4.6 L10.3 1.6 L12.4 4.6 Z" fill="#e8736b"/></svg>
<svg class="abs" style="left:342px;top:604.35px" width="14" height="15" viewBox="0 0 14 15"><circle cx="4.8" cy="7.8" r="3.85" fill="#5fb36a"/><path d="M4 5.9 H5.6 M4.8 5.9 V9.7 M4 9.7 H5.6" stroke="#4a4a4a" stroke-width="0.9" fill="none"/><path d="M10.3 12.6 V3.2" stroke="#dc4f48" stroke-width="1.1"/><path d="M8.2 4.6 L10.3 1.6 L12.4 4.6 Z" fill="#e8736b"/></svg>
</body></html>
